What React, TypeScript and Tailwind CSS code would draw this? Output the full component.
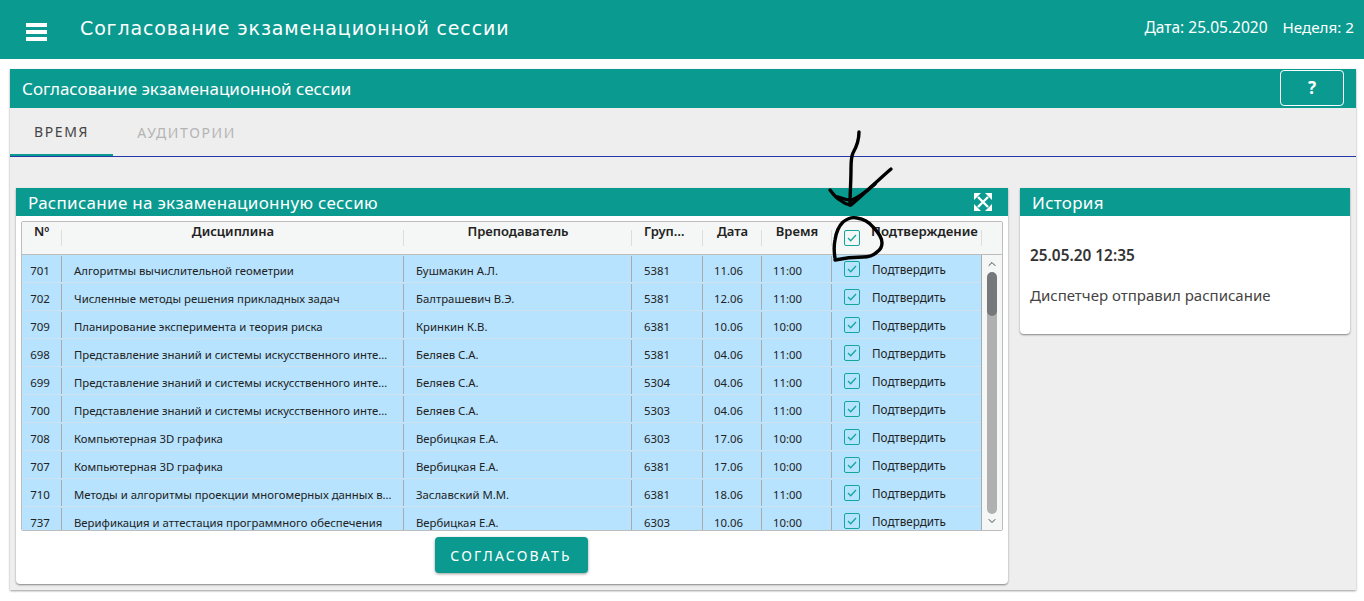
import { ChevronDown, ChevronUp } from 'lucide-react'

const rows = [
  ['701', 'Алгоритмы вычислительной геометрии', 'Бушмакин А.Л.', '5381', '11.06', '11:00'],
  ['702', 'Численные методы решения прикладных задач', 'Балтрашевич В.Э.', '5381', '12.06', '11:00'],
  ['709', 'Планирование эксперимента и теория риска', 'Кринкин К.В.', '6381', '10.06', '10:00'],
  ['698', 'Представление знаний и системы искусственного инте…', 'Беляев С.А.', '5381', '04.06', '11:00'],
  ['699', 'Представление знаний и системы искусственного инте…', 'Беляев С.А.', '5304', '04.06', '11:00'],
  ['700', 'Представление знаний и системы искусственного инте…', 'Беляев С.А.', '5303', '04.06', '11:00'],
  ['708', 'Компьютерная 3D графика', 'Вербицкая Е.А.', '6303', '17.06', '10:00'],
  ['707', 'Компьютерная 3D графика', 'Вербицкая Е.А.', '6381', '17.06', '10:00'],
  ['710', 'Методы и алгоритмы проекции многомерных данных в…', 'Заславский М.М.', '6381', '18.06', '11:00'],
  ['737', 'Верификация и аттестация программного обеспечения', 'Вербицкая Е.А.', '6303', '10.06', '10:00'],
]

const gridCols = 'grid grid-cols-[40px_342px_228px_71px_59px_70px_150px]'

function CheckBox() {
  return (
    <span className="flex h-4 w-4 items-center justify-center rounded-[2px] border-[1.5px] border-[#12a79c]">
      <svg width="10" height="8" viewBox="0 0 10 8" fill="none" stroke="#12a79c" strokeWidth="1.3">
        <path d="M1 4l2.7 2.7L9 1" />
      </svg>
    </span>
  )
}

function HeadCell({ children, left }: { children?: React.ReactNode; left?: boolean }) {
  return (
    <div className={`relative h-full text-[13px] font-semibold text-[#222] ${left ? 'pl-[12px]' : 'text-center'}`}>
      {children}
      <span className="absolute top-[8px] right-0 h-4 w-px bg-[#ddd]" />
    </div>
  )
}

function App() {
  return (
    <div className="relative h-[601px] w-[1364px] overflow-hidden bg-white font-['Noto_Sans','Open_Sans',sans-serif] text-[#333]">
      <header className="flex h-[59px] items-center bg-[#0a9a90] pr-[10px] text-white">
        <div className="flex w-[80px] justify-center">
          <div className="mt-[5px] mr-[7px] flex w-[21px] flex-col gap-[3px]">
            <span className="h-[4px] bg-white" />
            <span className="h-[4px] bg-white" />
            <span className="h-[4px] bg-white" />
          </div>
        </div>
        <h1 className="-mt-[3px] font-['DejaVu_Sans',sans-serif] text-[19px] font-normal tracking-[0.86px]">Согласование экзаменационной сессии</h1>
        <div className="-mt-[3px] ml-auto flex gap-[15px] text-[15.2px]">
          <span className="text-[15.5px]">Дата: 25.05.2020</span>
          <span>Неделя: 2</span>
        </div>
      </header>

      <main className="mx-[10px] mt-[10px] h-[521px] w-[1346px] bg-[#eeeeee] shadow-[0_1px_2px_rgba(0,0,0,0.4)]">
        <div className="flex h-[39px] items-center justify-between bg-[#0a9a90] pr-[12px] pl-[12px] text-white">
          <span className="mt-[1px] text-[17px]">Согласование экзаменационной сессии</span>
          <button className="mt-[-1px] flex h-[36px] w-[64px] items-center justify-center rounded-[4px] border border-white text-[17px] font-bold">?</button>
        </div>

        <div className="flex h-[49px] border-b border-[#2438a8]">
          <div className="flex h-[48px] w-[103px] items-center justify-center border-b-[2px] border-[#0a9a90] text-[14px] tracking-[1.6px] text-[#444]">ВРЕМЯ</div>
          <div className="flex h-[48px] w-[147px] items-center justify-center text-[14px] tracking-[1.6px] text-[#b4b4b4]">АУДИТОРИИ</div>
        </div>

        <div className="mt-[31px] flex items-start gap-[12px] pl-[6px]">
          <section className="h-[396px] w-[992px] rounded-b-[4px] bg-white shadow-[0_1px_2px_rgba(0,0,0,0.45)]">
            <div className="flex h-[28px] items-center justify-between bg-[#0a9a90] pr-[16px] pl-[12px] text-white">
              <span className="mt-[1px] text-[17px] tracking-[0.28px]">Расписание на экзаменационную сессию</span>
              <svg width="18" height="18" viewBox="0 0 18 18" fill="white" stroke="white" strokeWidth="2.4">
                <path d="M4 4l10 10M14 4L4 14" />
                <path d="M0 0h7L0 7zM18 0v7l-7-7zM18 18h-7l7-7zM0 18v-7l7 7z" stroke="none" />
              </svg>
            </div>

            <div className="mx-[5px] mt-[5px] flex h-[310px] flex-col overflow-hidden rounded-[2px] border border-[#bdbdbd]">
              <div className="flex h-[33px] shrink-0 border-b border-[#bdbdbd] bg-[#f5f6f6]">
                <div className={`${gridCols} flex-1`}>
                  <HeadCell left>Nº</HeadCell>
                  <HeadCell>Дисциплина</HeadCell>
                  <HeadCell>Преподаватель</HeadCell>
                  <HeadCell left>Груп…</HeadCell>
                  <HeadCell>Дата</HeadCell>
                  <HeadCell>Время</HeadCell>
                  <div className="relative flex h-full items-start">
                    <span className="mt-[8px] ml-[12px]"><CheckBox /></span>
                    <span className="ml-[11px] text-[13.2px] font-semibold whitespace-nowrap text-[#222]">Подтверждение</span>
                    <span className="absolute top-[8px] right-0 h-4 w-px bg-[#ddd]" />
                  </div>
                </div>
                <div className="w-[21px]" />
              </div>

              <div className="flex min-h-0 flex-1">
                <div className="min-w-0 flex-1 overflow-hidden bg-[#b7e3fe]">
                  {rows.map((r) => (
                    <div key={r[0]} className={`${gridCols} h-[28px] border-b border-[#cfe3ee] pt-[1px] text-[11.35px] text-[#222]`}>
                      <div className="flex items-center justify-center border-r border-[#aaa] pt-[4px] pr-[3px] text-[11.5px]">{r[0]}</div>
                      <div className="flex min-w-0 items-center border-r border-[#aaa] pt-[4px] pl-[12px] whitespace-nowrap">{r[1]}</div>
                      <div className="flex items-center border-r border-[#aaa] pt-[4px] pl-[12px]">{r[2]}</div>
                      <div className="flex items-center border-r border-[#aaa] pt-[4px] pl-[12px]">{r[3]}</div>
                      <div className="flex items-center border-r border-[#aaa] pt-[4px] pl-[11px]">{r[4]}</div>
                      <div className="flex items-center border-r border-[#aaa] pt-[4px] pl-[11px]">{r[5]}</div>
                      <div className="flex items-center pl-[12px]">
                        <CheckBox />
                        <span className="mt-[2px] ml-[12px] text-[11.7px]">Подтвердить</span>
                      </div>
                    </div>
                  ))}
                </div>
                <div className="flex w-[21px] shrink-0 flex-col items-center border-l border-[#aaa] bg-[#f5f6f6]">
                  <ChevronUp className="mt-[3px] h-3 w-3 text-[#444]" />
                  <div className="mt-[2px] flex h-[242px] w-[10px] flex-col overflow-hidden rounded-full bg-[#b0b0b0]">
                    <div className="h-[44px] rounded-full bg-[#75777a]" />
                  </div>
                  <ChevronDown className="mt-[1px] h-3 w-3 text-[#444]" />
                </div>
              </div>
            </div>

            <div className="mt-[6px] flex justify-center pr-[2px]">
              <button className="h-[36px] w-[153px] rounded-[4px] bg-[#0a9a90] text-[14px] tracking-[2.2px] text-white shadow-[0_1px_3px_rgba(0,0,0,0.4)]">СОГЛАСОВАТЬ</button>
            </div>
          </section>

          <aside className="h-[146px] w-[330px] rounded-b-[4px] bg-white shadow-[0_1px_2px_rgba(0,0,0,0.45)]">
            <div className="flex h-[28px] items-center bg-[#0a9a90] pt-[1px] pl-[12px] text-[17px] tracking-[0.28px] text-white">История</div>
            <p className="mt-[28px] pl-[10px] text-[15.4px] font-semibold text-[#333]">25.05.20 12:35</p>
            <p className="mt-[17px] pl-[10px] text-[15px] text-[#444]">Диспетчер отправил расписание</p>
          </aside>
        </div>
      </main>

      {/* hand-drawn arrow and circle on top of the table header */}
      <svg className="absolute top-[125px] left-[825px]" width="70" height="140" viewBox="825 125 70 140" fill="none" stroke="#000" strokeWidth="3.4" strokeLinecap="round" strokeLinejoin="round">
        <path d="M859 132c0 7-2 14-6 21-2 4-2 10-2 16 0 12-1 24-1 36" />
        <path d="M830 190c3 4 6 8 10 10 4 3 8 5 11 5 12-10 26-24 40-36" />
        <path d="M838 197c5 2 9 3 14 3 7-3 15-9 23-16" />
        <path d="M835 258c-1-6-1-13 0-18 1-7 4-14 8-18 5-4 10-5 14-4 7 1 12 4 16 9 5 5 9 11 9 16 0 4-2 7-5 9-4 4-9 5-14 5-9 0-19 1-28 3" />
      </svg>
    </div>
  )
}

export default App
